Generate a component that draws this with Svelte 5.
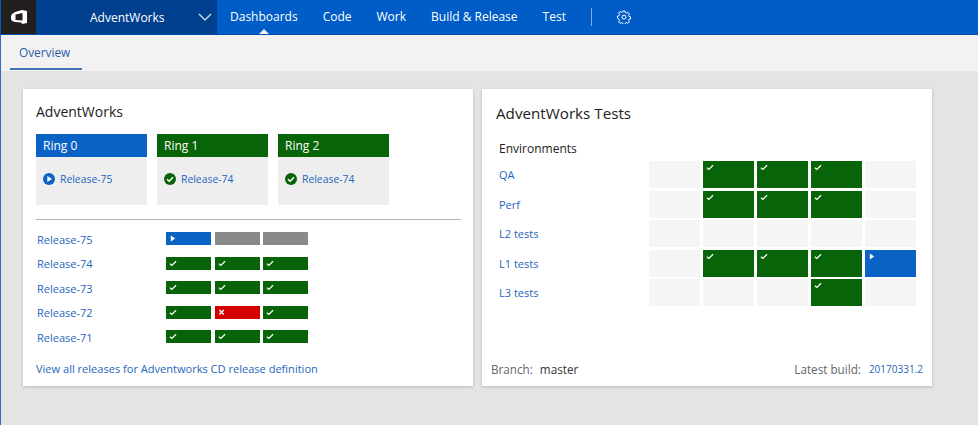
<script>
  const nav = ['Dashboards', 'Code', 'Work', 'Build & Release', 'Test'];
  const rings = [
    { name: 'Ring 0', rel: 'Release-75', s: 'run' },
    { name: 'Ring 1', rel: 'Release-74', s: 'ok' },
    { name: 'Ring 2', rel: 'Release-74', s: 'ok' }
  ];
  const releases = [
    { name: 'Release-75', cells: ['run', 'idle', 'idle'] },
    { name: 'Release-74', cells: ['ok', 'ok', 'ok'] },
    { name: 'Release-73', cells: ['ok', 'ok', 'ok'] },
    { name: 'Release-72', cells: ['ok', 'fail', 'ok'] },
    { name: 'Release-71', cells: ['ok', 'ok', 'ok'] }
  ];
  const envs = [
    { name: 'QA', cells: ['', 'ok', 'ok', 'ok', ''] },
    { name: 'Perf', cells: ['', 'ok', 'ok', 'ok', ''] },
    { name: 'L2 tests', cells: ['', '', '', '', ''] },
    { name: 'L1 tests', cells: ['', 'ok', 'ok', 'ok', 'run'] },
    { name: 'L3 tests', cells: ['', '', '', 'ok', ''] }
  ];
</script>

{#snippet mark(s)}
  {#if s === 'ok'}
    <svg class="mark" width="8" height="7" viewBox="0 0 9 8"><path d="M1 4.2 3.2 6.2 8 1.4" fill="none" stroke="#fff" stroke-width="1.4" /></svg>
  {:else if s === 'run'}
    <svg class="mark" width="8" height="7" viewBox="0 0 9 8"><path d="M2 .5 7 4 2 7.500z" fill="#fff" /></svg>
  {:else if s === 'fail'}
    <svg class="mark" width="8" height="7" viewBox="0 0 9 8"><path d="M1.500 1.200 6.500 6.200M6.500 1.200 1.500 6.200" fill="none" stroke="#fff" stroke-width="1.500" /></svg>
  {/if}
{/snippet}

<div class="page">
  <header class="top">
    <div class="logo">
      <svg width="16" height="14" viewBox="0 0 16 14"><path fill-rule="evenodd" d="M11 0 4 2 1 4 0 6v3l1 2 3 1 6 .5 1.500 1.500L16 13V1zM4.500 4.500 11.500 3v7.500l-7-.5z" fill="#fff" /></svg>
    </div>
    <div class="project">
      <span>AdventWorks</span>
      <svg width="14" height="8" viewBox="0 0 14 8"><path d="M1 1 7 7 13 1" fill="none" stroke="#dfe9f5" stroke-width="1.2" /></svg>
    </div>
    <nav class="nav">
      {#each nav as item, i}
        <span class="nav-item" class:active={i === 0}>{item}</span>
      {/each}
      <span class="sep"></span>
      <svg class="gear" width="14" height="14" viewBox="0 0 14 14">
        <path d="M5.900 1h2.200l.3 1.700 1 .5 1.500-.9 1.500 1.600-.9 1.400.4 1.100 1.600.4v2.200l-1.600.4-.4 1 .9 1.500-1.500 1.500-1.500-.9-1 .5-.3 1.600H5.900l-.3-1.600-1-.5-1.500.9-1.500-1.500.9-1.500-.4-1L.5 8.200V6l1.600-.4.4-1.100-.9-1.400 1.500-1.600 1.500.9 1-.5z" fill="none" stroke="#fff" stroke-width="1" />
        <circle cx="7" cy="7.100" r="2" fill="none" stroke="#fff" stroke-width="1" />
      </svg>
    </nav>
  </header>

  <div class="tabs"><span class="tab">Overview</span></div>

  <main class="board">
    <section class="card left">
      <h2>AdventWorks</h2>
      <div class="rings">
        {#each rings as r}
          <div class="ring">
            <div class="ring-head {r.s}">{r.name}</div>
            <div class="ring-body">
              {#if r.s === 'run'}
                <svg width="12" height="12" viewBox="0 0 12 12"><circle cx="6" cy="6" r="6" fill="#0a63c4" /><path d="M4.300 3 9 6 4.300 9z" fill="#fff" /></svg>
              {:else}
                <svg width="12" height="12" viewBox="0 0 12 12"><circle cx="6" cy="6" r="6" fill="#086408" /><path d="M3 6.200 5.200 8.300 9 4.200" fill="none" stroke="#fff" stroke-width="1.500" /></svg>
              {/if}
              <a href="#r">{r.rel}</a>
            </div>
          </div>
        {/each}
      </div>
      <hr />
      <div class="rels">
        {#each releases as rel}
          <div class="rel">
            <a href="#r">{rel.name}</a>
            <div class="bars">
              {#each rel.cells as c}
                <span class="bar {c}">{@render mark(c)}</span>
              {/each}
            </div>
          </div>
        {/each}
      </div>
      <a class="all" href="#r">View all releases for Adventworks CD release definition</a>
    </section>

    <section class="card right">
      <h2>AdventWorks Tests</h2>
      <div class="env-title">Environments</div>
      <div class="envs">
        {#each envs as e}
          <div class="env">
            <a href="#e">{e.name}</a>
            <div class="cells">
              {#each e.cells as c}
                <span class="cell {c}">{@render mark(c)}</span>
              {/each}
            </div>
          </div>
        {/each}
      </div>
      <footer class="foot">
        <span class="muted">Branch:</span><span class="branch">master</span>
        <span class="spacer"></span>
        <span class="muted">Latest build:</span><a class="build" href="#b">20170331.2</a>
      </footer>
    </section>
  </main>
</div>

<style>
  :global(body) { margin: 0; }
  .page {
    width: 978px; height: 425px; overflow: hidden; box-sizing: border-box;
    font-family: "Open Sans", "Noto Sans", sans-serif; font-size: 11px;
    background: #e4e4e4; color: #222; display: flex; flex-direction: column;
  }
  a { color: #1f66bd; text-decoration: none; }
  .top { height: 35px; flex: none; display: flex; background: #005cc6; border-bottom: 1px solid #0051ad; box-sizing: border-box; color: #fff; }
  .logo { width: 35px; margin-left: 1px; background: #231f1f; display: flex; align-items: center; justify-content: center; }
  .project { width: 181px; box-sizing: border-box; padding: 0 5px 0 54px; background: #00408f; display: flex; align-items: center; justify-content: space-between; font-size: 12px; }
  .nav { display: flex; align-items: center; padding-left: 13px; font-size: 12px; }
  .nav-item { margin-right: 25px; position: relative; white-space: nowrap; line-height: 34px; }
  .nav-item.active::after {
    content: ""; position: absolute; left: 50%; bottom: 0; margin-left: -5px;
    border: 5px solid transparent; border-top: 0; border-bottom-color: #f2f2f2;
  }
  .sep { width: 1px; height: 18px; background: #7fafe4; margin-right: 25px; }
  .tabs { height: 36px; flex: none; background: #f2f2f2; padding-left: 9px; border-left: 1px solid #2a6fc0; }
  .tab { display: inline-block; height: 35px; line-height: 35px; width: 72px; box-sizing: border-box; padding-left: 9px; border-bottom: 2px solid #3f77b5; color: #2d5fa8; font-size: 11.800px; }
  .board { flex: 1; display: flex; gap: 9px; padding: 18px 0 0 22px; border-left: 1px solid #2a6fc0; align-items: flex-start; }
  .card { width: 450px; height: 297px; background: #fff; box-shadow: 0 1px 3px rgba(0,0,0,.2); box-sizing: border-box; position: relative; display: flex; flex-direction: column; }
  h2 { margin: 0; font-weight: 400; color: #222; }
  .left { padding: 14px 12px 0 13px; }
  .left h2 { font-size: 14px; line-height: 18px; }
  .rings { display: flex; gap: 10px; margin-top: 13px; }
  .ring { width: 111px; height: 71px; background: #eeeeee; }
  .ring-head { height: 23px; line-height: 23px; padding-left: 7px; color: #fff; font-size: 12px; }
  .ring-head.run { background: #0a63c4; }
  .ring-head.ok { background: #086408; }
  .ring-body { display: flex; align-items: center; gap: 5px; padding: 15px 0 0 7px; font-size: 10.400px; }
  hr { border: 0; height: 1px; background: #b5b5b5; margin: 14px 0 0; }
  .rels { margin-top: 7px; }
  .rel { height: 24.500px; display: flex; align-items: center; }
  .rel a { width: 130px; padding-left: 1px; box-sizing: border-box; }
  .bars { display: flex; gap: 3.500px; margin-top: -1px; }
  .bar { width: 45px; height: 13px; position: relative; }
  .run { background: #0a63c4; }
  .ok { background: #086408; }
  .fail { background: #d40000; }
  .idle { background: #8a8a8a; }
  .mark { position: absolute; left: 3px; top: 3px; }
  .all { margin-top: 11px; font-size: 11.050px; }
  .right { padding: 14px 9px 0 9px; }
  .right h2 { font-size: 15.200px; line-height: 21px; margin-left: 5px; }
  .env-title { margin: 16px 0 0 8px; font-size: 12px; line-height: 17px; color: #222; }
  .envs { margin-top: 4px; display: flex; flex-direction: column; gap: 2.500px; }
  .env { display: flex; align-items: flex-start; height: 27px; }
  .env a { width: 158px; padding: 6px 0 0 8px; box-sizing: border-box; }
  .cells { display: flex; gap: 3px; }
  .cell { width: 51px; height: 27px; background: #f5f5f5; position: relative; }
  .cell.ok { background: #086408; }
  .cell.run { background: #0a63c4; }
  .foot { margin-top: auto; height: 25px; display: flex; align-items: flex-start; color: #555; font-size: 11.700px; }
  .muted { color: #666; }
  .branch { margin-left: 7px; color: #333; }
  .spacer { flex: 1; }
  .build { margin-left: 8px; font-size: 10px; line-height: 16px; }
</style>
